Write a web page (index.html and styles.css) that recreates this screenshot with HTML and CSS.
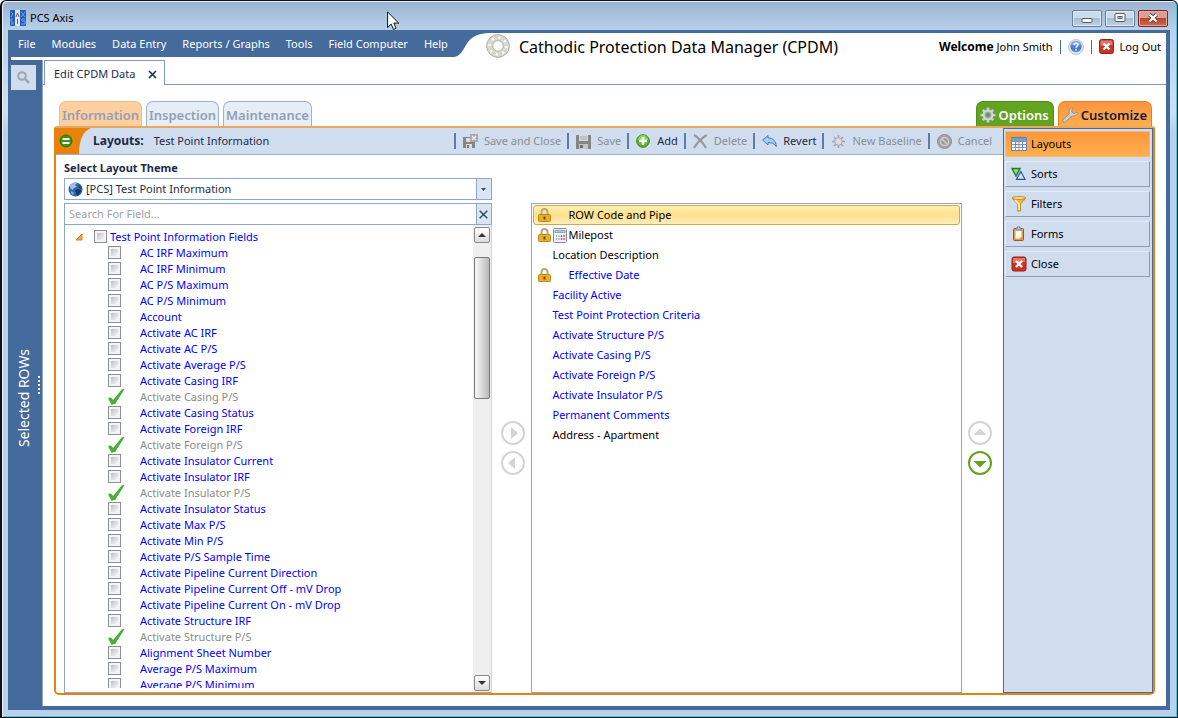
FILE: index.html
```html
<!DOCTYPE html>
<html lang="en">
<head>
  <meta charset="UTF-8">
  <title>PCS Axis</title>
  <link rel="stylesheet" href="styles.css">
</head>
<body>
  <div class="window">
    <div class="titlebar">
      <svg class="app-icon" width="16" height="16" viewBox="0 0 16 16">
        <rect width="16" height="16" rx="1" fill="#1f5fc0"/>
        <rect x="5" width="5" height="16" fill="#e4e4e4"/>
        <path d="M1 2l2 2-2 3M3 9H1v3h2v2H1M11 2l4 5M15 2l-4 5M15 9h-3v2h3v3h-4" fill="none" stroke="#6fa2e6"/>
        <path d="M6 7l1.500-4L9 7M7.500 9v5" fill="none" stroke="#667"/>
      </svg>
      <span class="app-name">PCS Axis</span>
      <div class="win-buttons">
        <button class="win-btn" aria-label="Minimize"><svg width="12" height="12" viewBox="0 0 12 12"><rect x="1" y="6.500" width="10" height="4" rx="1" fill="#fff" stroke="#4b5a70"/></svg></button>
        <button class="win-btn" aria-label="Maximize"><svg width="12" height="12" viewBox="0 0 12 12"><rect x="1" y="1.500" width="10" height="8" rx="1" fill="#fff" stroke="#4b5a70"/><rect x="4" y="4.500" width="4" height="2" fill="#a5bcd6" stroke="#4b5a70"/></svg></button>
        <button class="win-btn win-close" aria-label="Close window"><svg width="12" height="12" viewBox="0 0 12 12"><path d="M2.500 2.500l7 7M9.500 2.500l-7 7" stroke="#5b4550" stroke-width="4"/><path d="M2.500 2.500l7 7M9.500 2.500l-7 7" stroke="#fff" stroke-width="2.400"/></svg></button>
      </div>
    </div>

    <div class="client">
      <header class="header">
        <nav class="menu">
          <a href="#">File</a>
          <a href="#">Modules</a>
          <a href="#">Data Entry</a>
          <a href="#">Reports / Graphs</a>
          <a href="#">Tools</a>
          <a href="#">Field Computer</a>
          <a href="#">Help</a>
        </nav>
        <svg class="curve" width="36" height="24" viewBox="0 0 36 24"><path d="M0 0H36C22 0 16 5 12 12C8 19 6 23 0 24Z" fill="#446b9c"/></svg>
        <svg class="ring" width="24" height="24" viewBox="0 0 24 24">
          <circle cx="12" cy="12" r="8.300" fill="none" stroke="#d8d8cc" stroke-width="6.200"/>
          <circle cx="12" cy="12" r="11.400" fill="none" stroke="#a4a49a" stroke-width=".8"/>
          <circle cx="12" cy="12" r="5.300" fill="#fff" stroke="#a4a49c" stroke-width=".8"/>
          <circle cx="12" cy="12" r="8.400" fill="none" stroke="#fff" stroke-width="2.400" stroke-dasharray="2 4.600"/>
        </svg>
        <h1>Cathodic Protection Data Manager (CPDM)</h1>
        <div class="user">
          <span><b>Welcome</b> John Smith</span>
          <i class="sep"></i>
          <a href="#" aria-label="Help"><svg width="16" height="16" viewBox="0 0 16 16"><circle cx="8" cy="8" r="7.500" fill="#dfe3ea" stroke="#c4c8d0"/><circle cx="8" cy="7.500" r="5.600" fill="#4b7fd6"/><path d="M3 6A5.300 5.300 0 0 1 13 6Z" fill="#86abea"/><path d="M6 6.200C6 3.600 10.200 3.700 10 6C9.900 7.300 8 7.200 8 8.800M8 10v1.600" fill="none" stroke="#fff" stroke-width="1.500"/></svg></a>
          <i class="sep"></i>
          <a href="#" class="logout"><svg width="15" height="15" viewBox="0 0 15 15"><rect x=".5" y=".5" width="14" height="14" rx="2" fill="#cc3325" stroke="#982015"/><path d="M1.500 7V2.500Q1.500 1.500 2.500 1.500H12.500Q13.500 1.500 13.500 2.500V6Z" fill="#e07768"/><path d="M4.500 4.500l6 6M10.500 4.500l-6 6" stroke="#fff" stroke-width="2.400"/></svg>Log Out</a>
        </div>
      </header>

      <div class="main">
        <aside class="rows-bar">
          <button class="find" aria-label="Search"><svg width="13" height="13" viewBox="0 0 13 13"><circle cx="5" cy="5" r="3.800" fill="none" stroke="#a0a4aa" stroke-width="2"/><path d="M8 8l4 4" stroke="#a0a4aa" stroke-width="2.400"/></svg></button>
          <div class="rows-label">
            <span>Selected ROWs</span>
            <i class="grip"></i>
          </div>
        </aside>

        <div class="content">
          <div class="doc-tabs">
            <div class="doc-tab">Edit CPDM Data <button aria-label="Close tab"><svg width="9" height="9" viewBox="0 0 9 9"><path d="M1 1l7 7M8 1l-7 7" stroke="#1d3557" stroke-width="1.700"/></svg></button></div>
          </div>

          <div class="page">
            <div class="section-tabs">
              <button class="tab tab-info">Information</button>
              <button class="tab">Inspection</button>
              <button class="tab">Maintenance</button>
              <button class="tab tab-options"><svg width="16" height="16" viewBox="0 0 16 16"><path d="M8 .5v15M.5 8h15M2.800 2.800l10.400 10.400M13.200 2.800L2.800 13.200" stroke="#c9cede" stroke-width="2.600"/><circle cx="8" cy="8" r="4.400" fill="#9aa2bd" stroke="#d5d9e6" stroke-width="2"/><circle cx="8" cy="8" r="2" fill="#63a31f"/></svg>Options</button>
              <button class="tab tab-customize"><svg width="16" height="16" viewBox="0 0 16 16"><path d="M2.500 13.500L9 7.500" stroke="#8b8b8b" stroke-width="4.400" stroke-linecap="round"/><path d="M11.500 .8C8 .5 6.500 3.500 7.500 6.500C8.500 9.500 13 10.500 15.500 6.500L15 5L12.500 6.500L10 5.500L9.700 3.200Z" fill="#d0d0d0" stroke="#8b8b8b" stroke-width=".8"/><path d="M2.500 13.500L9.500 7" stroke="#d0d0d0" stroke-width="2.800" stroke-linecap="round"/></svg>Customize</button>
            </div>

            <div class="panel">
              <div class="work">
                <div class="toolbar">
                  <div class="corner">
                    <svg width="37" height="26" viewBox="0 0 37 26"><path d="M0 0H35C27 3 23 12 23 26H0Z" fill="#e8820c"/><circle cx="10" cy="13" r="6" fill="#3c9312" stroke="#2b740b"/><path d="M6.500 11h7M6.500 15h7" stroke="#fff" stroke-width="2"/></svg>
                  </div>
                  <b>Layouts:</b>
                  <span class="layout-name">Test Point Information</span>
                  <div class="actions">
                    <button class="action" disabled><svg width="15" height="15" viewBox="0 0 15 15"><path d="M0 3h12v11H0z" fill="#858585"/><path d="M3 4h5v4H3zM3 10h6v4H3z" fill="#dcdcdc"/><path d="M4 11h2v3H4z" fill="#777"/><path d="M7 0h8v8H7z" fill="#a8a8a8"/><path d="M9 2l4 4M13 2L9 6" stroke="#eee" stroke-width="1.400"/></svg>Save and Close</button>
                    <button class="action" disabled><svg width="15" height="15" viewBox="0 0 15 15"><path d="M0 1h15v14H0z" fill="#858585"/><path d="M3 1h9v6H3z" fill="#d8d8d8"/><path d="M4 3h7M4 5h7" stroke="#a8a8a8"/><path d="M3 10h9v5H3z" fill="#c6c6c6"/><path d="M4 11h3v3H4z" fill="#6e6e6e"/></svg>Save</button>
                    <button class="action"><svg width="15" height="15" viewBox="0 0 15 15"><circle cx="7" cy="7" r="6.300" fill="#55b52a" stroke="#2f8a14"/><path d="M2 6A5 5 0 0 1 12 6Z" fill="#8cd363"/><path d="M7 3v8M3 7h8" stroke="#fff" stroke-width="2.600"/></svg>Add</button>
                    <button class="action" disabled><svg width="15" height="15" viewBox="0 0 15 15"><path d="M1 1C6 4 10 9 13 14M14 1C8 4 4 9 1 14" fill="none" stroke="#999" stroke-width="2.200"/></svg>Delete</button>
                    <button class="action"><svg width="15" height="15" viewBox="0 0 15 15"><path d="M.7 6L6 1.500V4C11 4 14 7 14.300 12.500C12 9.500 10 8.500 6 8.500V11Z" fill="#a9cdf0" stroke="#3f78b5"/></svg>Revert</button>
                    <button class="action" disabled><svg width="15" height="15" viewBox="0 0 15 15"><path d="M7.500 1v13M1 7.500h13M3 3l9 9M12 3L3 12" stroke="#a5a5a5" stroke-width="1.700"/><circle cx="7.500" cy="7.500" r="3.800" fill="#d9dde2" stroke="#a8a8a8"/></svg>New Baseline</button>
                    <button class="action" disabled><svg width="15" height="15" viewBox="0 0 15 15"><circle cx="7.500" cy="7.500" r="7" fill="#a3a3a3" stroke="#8f8f8f"/><circle cx="7.500" cy="7.500" r="4" fill="#999" stroke="#cdcdcd" stroke-width="1.500"/><path d="M4.500 4.500l6 6" stroke="#cdcdcd" stroke-width="1.700"/></svg>Cancel</button>
                  </div>
                </div>

                <div class="editor">
                  <div class="fields">
                    <label class="theme-label" for="theme">Select Layout Theme</label>
                    <div class="combo">
                      <svg width="15" height="15" viewBox="0 0 15 15"><circle cx="7.500" cy="7.500" r="7" fill="#2f66ad"/><path d="M2 3Q5 0 9 1L7 3L9 4.500L6 6L4.500 8L2 6Z" fill="#9dbfe6"/><path d="M7 8L11 7L13.500 9Q12 12 9 14L8 11Z" fill="#16396f"/><path d="M10 3l3 1 1 3-3-1z" fill="#1b427e"/><path d="M3 9l3 2-1 2-2-2z" fill="#88aede"/></svg>
                      <select id="theme"><option>[PCS] Test Point Information</option></select>
                      <span class="drop"><svg width="5" height="3" viewBox="0 0 5 3"><path d="M0 0h5L2.500 3z" fill="#2c4a77"/></svg></span>
                    </div>
                    <div class="search">
                      <input type="text" placeholder="Search For Field..." aria-label="Search For Field">
                      <button class="drop" aria-label="Clear search"><svg width="9" height="9" viewBox="0 0 9 9"><path d="M.7 .7l7.600 7.600M8.300 .7L.7 8.300" stroke="#34496a" stroke-width="1.500"/></svg></button>
                    </div>
                    <div class="tree">
                      <div class="tree-body">
                        <label class="root"><svg width="8" height="8" viewBox="0 0 8 8"><path d="M7 1v6H1z" fill="#f9a54a" stroke="#e07d15"/></svg><input type="checkbox">Test Point Information Fields</label>
                        <label><input type="checkbox">AC IRF Maximum</label>
                        <label><input type="checkbox">AC IRF Minimum</label>
                        <label><input type="checkbox">AC P/S Maximum</label>
                        <label><input type="checkbox">AC P/S Minimum</label>
                        <label><input type="checkbox">Account</label>
                        <label><input type="checkbox">Activate AC IRF</label>
                        <label><input type="checkbox">Activate AC P/S</label>
                        <label><input type="checkbox">Activate Average P/S</label>
                        <label><input type="checkbox">Activate Casing IRF</label>
                        <label class="used"><input type="checkbox" checked disabled>Activate Casing P/S</label>
                        <label><input type="checkbox">Activate Casing Status</label>
                        <label><input type="checkbox">Activate Foreign IRF</label>
                        <label class="used"><input type="checkbox" checked disabled>Activate Foreign P/S</label>
                        <label><input type="checkbox">Activate Insulator Current</label>
                        <label><input type="checkbox">Activate Insulator IRF</label>
                        <label class="used"><input type="checkbox" checked disabled>Activate Insulator P/S</label>
                        <label><input type="checkbox">Activate Insulator Status</label>
                        <label><input type="checkbox">Activate Max P/S</label>
                        <label><input type="checkbox">Activate Min P/S</label>
                        <label><input type="checkbox">Activate P/S Sample Time</label>
                        <label><input type="checkbox">Activate Pipeline Current Direction</label>
                        <label><input type="checkbox">Activate Pipeline Current Off - mV Drop</label>
                        <label><input type="checkbox">Activate Pipeline Current On - mV Drop</label>
                        <label><input type="checkbox">Activate Structure IRF</label>
                        <label class="used"><input type="checkbox" checked disabled>Activate Structure P/S</label>
                        <label><input type="checkbox">Alignment Sheet Number</label>
                        <label><input type="checkbox">Average P/S Maximum</label>
                        <label><input type="checkbox">Average P/S Minimum</label>
                      </div>
                      <div class="scrollbar">
                        <button class="scroll-btn" aria-label="Scroll up"><svg width="8" height="4" viewBox="0 0 8 4"><path d="M0 4h8L4 0z" fill="#333"/></svg></button>
                        <div class="track"><div class="thumb"></div></div>
                        <button class="scroll-btn" aria-label="Scroll down"><svg width="8" height="4" viewBox="0 0 8 4"><path d="M0 0h8L4 4z" fill="#333"/></svg></button>
                      </div>
                    </div>
                  </div>

                  <div class="movers">
                    <button class="round" aria-label="Add field" disabled><svg width="24" height="24" viewBox="0 0 24 24"><circle cx="12" cy="12" r="11" fill="#fff" stroke="currentColor" stroke-width="2"/><path d="M10 6v12l7-6z" fill="currentColor"/></svg></button>
                    <button class="round" aria-label="Remove field" disabled><svg width="24" height="24" viewBox="0 0 24 24"><circle cx="12" cy="12" r="11" fill="#fff" stroke="currentColor" stroke-width="2"/><path d="M14 6v12l-7-6z" fill="currentColor"/></svg></button>
                  </div>

                  <ul class="selected">
                    <li class="current"><svg class="lock" width="13" height="14" viewBox="0 0 13 14"><path d="M3.500 7V4a3 3 0 0 1 6 0v3" fill="none" stroke="#b7a77c" stroke-width="2"/><rect x=".5" y="6.500" width="12" height="7" rx="1" fill="#e9ad2c" stroke="#bf8516"/><path d="M6.500 8.500v3" stroke="#6b4a08" stroke-width="2"/></svg><span class="slot"></span>ROW Code and Pipe</li>
                    <li><svg class="lock" width="13" height="14" viewBox="0 0 13 14"><path d="M3.500 7V4a3 3 0 0 1 6 0v3" fill="none" stroke="#b7a77c" stroke-width="2"/><rect x=".5" y="6.500" width="12" height="7" rx="1" fill="#e9ad2c" stroke="#bf8516"/><path d="M6.500 8.500v3" stroke="#6b4a08" stroke-width="2"/></svg><span class="slot"><svg width="14" height="15" viewBox="0 0 14 15"><rect x=".5" y=".5" width="13" height="14" rx="1" fill="#eef0f8" stroke="#8488a0"/><path d="M2 2.500h10v2H2z" fill="#a9cbee" stroke="#8aa"/><path d="M3.500 7v6M6 7v6" stroke="#99a0c4" stroke-dasharray="2 1"/><path d="M8.500 7v6M11 7v6" stroke="#d8565a" stroke-width="1.400" stroke-dasharray="2 1"/></svg></span>Milepost</li>
                    <li><span class="lock"></span>Location Description</li>
                    <li class="blue"><svg class="lock" width="13" height="14" viewBox="0 0 13 14"><path d="M3.500 7V4a3 3 0 0 1 6 0v3" fill="none" stroke="#b7a77c" stroke-width="2"/><rect x=".5" y="6.500" width="12" height="7" rx="1" fill="#e9ad2c" stroke="#bf8516"/><path d="M6.500 8.500v3" stroke="#6b4a08" stroke-width="2"/></svg><span class="slot"></span>Effective Date</li>
                    <li class="blue"><span class="lock"></span>Facility Active</li>
                    <li class="blue"><span class="lock"></span>Test Point Protection Criteria</li>
                    <li class="blue"><span class="lock"></span>Activate Structure P/S</li>
                    <li class="blue"><span class="lock"></span>Activate Casing P/S</li>
                    <li class="blue"><span class="lock"></span>Activate Foreign P/S</li>
                    <li class="blue"><span class="lock"></span>Activate Insulator P/S</li>
                    <li class="blue"><span class="lock"></span>Permanent Comments</li>
                    <li><span class="lock"></span>Address - Apartment</li>
                  </ul>

                  <div class="movers">
                    <button class="round" aria-label="Move up" disabled><svg width="24" height="24" viewBox="0 0 24 24"><circle cx="12" cy="12" r="11" fill="#fff" stroke="currentColor" stroke-width="2"/><path d="M5.500 14h13L12 7.500z" fill="currentColor"/></svg></button>
                    <button class="round" aria-label="Move down"><svg width="24" height="24" viewBox="0 0 24 24"><circle cx="12" cy="12" r="11" fill="#fff" stroke="currentColor" stroke-width="2"/><path d="M5.500 10h13L12 16.500z" fill="currentColor"/></svg></button>
                  </div>
                </div>
              </div>

              <nav class="side">
                <button class="side-btn active"><svg width="16" height="14" viewBox="0 0 16 14"><path d="M.5 .5h15v13H.5z" fill="#fff" stroke="#5c7fae"/><path d="M1 1h14v3H1z" fill="#6aa5de"/><path d="M0 4.500h16M0 7.500h16M0 10.500h16M4.500 1v13M8 1v13M11.500 1v13" stroke="#7c93b5"/></svg>Layouts</button>
                <button class="side-btn"><svg width="16" height="16" viewBox="0 0 16 16"><path d="M1 2.500h8L5 10z" fill="#8fdc8a" stroke="#1f7a2c" stroke-width="1.400"/><path d="M5.500 13.300h8.500L9.800 5.500z" fill="#d5e5f8" stroke="#2d4f93" stroke-width="1.200"/></svg>Sorts</button>
                <button class="side-btn"><svg width="16" height="16" viewBox="0 0 16 16"><path d="M1 2l5.500 6v7h3V8L15 2z" fill="#f0b53c" stroke="#bb8015" stroke-width=".8"/><path d="M4 4l4 4v6" fill="none" stroke="#fff0b8" stroke-width="1.600"/><ellipse cx="8" cy="2" rx="7" ry="1.500" fill="#f7d78c" stroke="#bb8015" stroke-width=".8"/></svg>Filters</button>
                <button class="side-btn"><svg width="16" height="16" viewBox="0 0 16 16"><rect x="2.500" y="2.500" width="10" height="12" rx="1" fill="#e49a45" stroke="#9b5a1c"/><path d="M4.500 4.500h6v6l-2 2h-4z" fill="#fff"/><path d="M5 4V2h1.500V.8h2V2H10v2z" fill="#c4d0e2" stroke="#51698e" stroke-width=".8"/></svg>Forms</button>
                <button class="side-btn"><svg width="16" height="16" viewBox="0 0 16 16"><rect x="1" y="1" width="14" height="14" rx="2" fill="#cc3325" stroke="#982015"/><path d="M2 7V2H14V6Z" fill="#e07768"/><path d="M5 5l6 6M11 5l-6 6" stroke="#fff" stroke-width="2.400"/></svg>Close</button>
              </nav>
            </div>
          </div>
        </div>
      </div>
    </div>
    <svg class="cursor" width="13" height="19" viewBox="0 0 13 19"><path d="M.6 1v15.500l3.600-3.400 2.300 5.300 2.600-1.100-2.300-5.200h5z" fill="#fff" stroke="#111"/></svg>
  </div>
</body>
</html>
```
FILE: styles.css
```css
* {
  box-sizing: border-box;
}
body {
  margin: 0;
  font-family: "Noto Sans", "Open Sans", sans-serif;
  font-size: 11px;
  line-height: 16px;
  color: #000;
}
button {
  font: inherit;
  color: inherit;
  border: none;
  padding: 0;
  background: none;
  display: flex;
  align-items: center;
  white-space: nowrap;
}
a {
  color: inherit;
  text-decoration: none;
}
svg {
  display: block;
  flex: none;
}

/* window frame */
.window {
  position: relative;
  display: flex;
  flex-direction: column;
  height: 100vh;
  min-height: 600px;
  padding: 0 7px 7px 6px;
  border: 1px solid #111;
  border-left-width: 2px;
  border-radius: 6px 6px 0 0;
  box-shadow: inset 1px 1px 0 #e6f0fa, inset -1px -1px 0 #35cfe6;
  background: linear-gradient(#9ab3d1, #b9d1ea 30px, #cfe0f3 110px, #b9d1ea 130px);
}
.titlebar {
  display: flex;
  align-items: center;
  height: 29px;
  padding: 5px 2px 0;
}
.app-name {
  margin-left: 4px;
}
.win-buttons {
  display: flex;
  gap: 3px;
  margin-left: auto;
}
.win-btn {
  width: 30px;
  height: 17px;
  justify-content: center;
  border: 1px solid #6a7f9c;
  border-radius: 2px;
  background: linear-gradient(#cddcec 45%, #a5bdd8 50%, #bcd2e8);
  box-shadow: inset 0 0 0 1px #dfe9f5;
}
.win-close {
  border-color: #762a26;
  background: linear-gradient(#dd9d93 45%, #bd4330 50%, #cc6a4c);
  box-shadow: inset 0 0 0 1px #e3aaa0;
}
.cursor {
  position: absolute;
  left: 385px;
  top: 10px;
}

.client {
  flex: 1;
  min-height: 0;
  display: flex;
  flex-direction: column;
  padding: 3px 4px 4px 3px;
  background: #446b9c;
}

/* menu and title */
.header {
  display: flex;
  height: 27px;
  background: #fff;
  white-space: nowrap;
}
.menu {
  display: flex;
  gap: 16px;
  height: 24px;
  padding: 3px 6px 0 7px;
  background: #446b9c;
  color: #fff;
}
.ring {
  margin: 1px 9px 0 -4px;
}
h1 {
  margin: 4px 0 0;
  font-size: 16px;
  font-weight: normal;
  line-height: 20px;
}
.user {
  display: flex;
  align-items: center;
  gap: 7px;
  margin-left: auto;
  padding-right: 5px;
}
.user b {
  font-size: 12px;
}
.logout {
  display: flex;
  align-items: center;
  gap: 6px;
}
.sep {
  width: 1px;
  height: 14px;
  background: #446b9c;
}

.main {
  flex: 1;
  min-height: 0;
  display: flex;
}
.rows-bar {
  display: flex;
  flex-direction: column;
  width: 31px;
  padding-top: 5px;
  color: #fff;
}
.find {
  width: 25px;
  height: 25px;
  justify-content: center;
  background: #d0ddee;
}
.rows-label {
  flex: 1;
  display: flex;
  align-items: center;
}
.rows-label span {
  width: 26px;
  font-size: 14px;
  line-height: 26px;
  writing-mode: vertical-rl;
  transform: rotate(180deg);
  white-space: nowrap;
}
.grip {
  height: 18px;
  margin: 0 0 26px 1px;
  border-left: 2px dotted #fff;
}

/* document area */
.content {
  flex: 1;
  min-width: 0;
  display: flex;
  flex-direction: column;
  background: #fff;
  border-left: 1px solid #8fa6c8;
}
.doc-tabs {
  display: flex;
  height: 25px;
  padding-left: 1px;
  border-bottom: 1px solid #8099c0;
}
.doc-tab {
  display: flex;
  align-items: center;
  gap: 13px;
  height: 25px;
  padding: 2px 7px 0 9px;
  border: 1px solid #8099c0;
  border-bottom: none;
  background: #fff;
  color: #1d2c4a;
}
.page {
  flex: 1;
  min-height: 0;
  display: flex;
  flex-direction: column;
  padding: 16px 11px 11px;
}
.section-tabs {
  display: flex;
  gap: 4px;
  padding: 0 3px 0 5px;
}
.tab {
  height: 25px;
  padding: 2px 2px 0;
  border: 1px solid #9db2cf;
  border-bottom: none;
  border-radius: 7px 7px 0 0;
  background: #e6edf7;
  color: #93a0b4;
  font-size: 13px;
  font-weight: 600;
}
.tab-info {
  border-color: #f0bd85;
  background: #ffcf9f;
}
.tab-options,
.tab-customize {
  gap: 3px;
  padding: 2px 4px 0 3px;
}
.tab-options {
  margin-left: auto;
  border-color: #4c8f14;
  background: #63a31f;
  color: #fff;
}
.tab-customize {
  border-color: #e8820c;
  background: linear-gradient(#ff9440, #ffad4c);
  color: #10203c;
}

.panel {
  flex: 1;
  min-height: 0;
  display: flex;
  border: 2px solid #e8820c;
  border-top-color: #eda75c;
  border-radius: 3px 3px 5px 5px;
}
.work {
  flex: 1;
  min-width: 0;
  display: flex;
  flex-direction: column;
}
.toolbar {
  display: flex;
  align-items: center;
  height: 27px;
  padding-right: 5px;
  border-bottom: 1px solid #9db2d3;
  background: #d0ddee;
  color: #1b2b49;
  white-space: nowrap;
}
.toolbar b {
  font-size: 12px;
}
.layout-name {
  margin-left: 10px;
}
.actions {
  display: flex;
  margin-left: auto;
}
.action {
  gap: 6px;
  height: 16px;
  padding: 0 6px 0 7px;
  border-left: 2px solid #5a7cab;
}
.action:disabled {
  color: #8b8d91;
}

.editor {
  flex: 1;
  min-height: 0;
  display: flex;
  padding-left: 8px;
}
.fields {
  flex: 427;
  min-width: 0;
  display: flex;
  flex-direction: column;
}
.theme-label {
  padding: 5px 0 2px;
  font-weight: bold;
  color: #1b2b49;
}
.combo,
.search {
  display: flex;
  align-items: center;
  border: 1px solid #8ea7cb;
  height: 22px;
}
.combo {
  padding-left: 3px;
  margin-bottom: 3px;
}
.combo select {
  flex: 1;
  appearance: none;
  border: none;
  padding: 0 3px;
  background: none;
  color: #1b2b49;
  font: inherit;
}
.drop {
  display: flex;
  align-items: center;
  justify-content: center;
  width: 15px;
  height: 20px;
  border-left: 1px solid #8ea7cb;
  background: #dbe6f4;
}
.search input {
  flex: 1;
  min-width: 0;
  border: none;
  padding: 0 4px;
  font: inherit;
}
.search input::placeholder {
  color: #a2a2aa;
}

/* field tree */
.tree {
  flex: 1;
  min-height: 0;
  display: flex;
  border: 1px solid #8ea7cb;
  border-right-color: #c9d7e8;
  border-top: none;
}
.tree-body {
  flex: 1;
  min-width: 0;
  overflow: hidden;
  padding-top: 4px;
  margin-bottom: 4px;
  color: #00f;
}
.tree label {
  display: flex;
  align-items: center;
  height: 16px;
  padding-left: 43px;
  white-space: nowrap;
}
.tree .root {
  padding-left: 10px;
}
.root svg {
  margin-right: 11px;
}
.tree .used {
  color: #8c8c8c;
}
.tree input {
  appearance: none;
  width: 13px;
  height: 13px;
  margin: 0 19px 2px 0;
  border: 1px solid #8a8f94;
  background: linear-gradient(135deg, #b9bec6, #fafafa) content-box, #f4f4f4;
  padding: 2px;
}
.tree .root input {
  margin-right: 3px;
}
.tree input:disabled {
  width: 17px;
  height: 16px;
  margin: 0 15px 0 0;
  border: none;
  background: #4caf35;
  clip-path: polygon(0 58%, 16% 52%, 30% 68%, 82% 2%, 98% 0, 42% 94%, 20% 98%);
}
.scrollbar {
  display: flex;
  flex-direction: column;
  width: 18px;
  padding: 2px 1px 1px;
  background: #efefef;
}
.scroll-btn {
  width: 16px;
  height: 16px;
  justify-content: center;
  border: 1px solid #888;
  border-radius: 2px;
  background: linear-gradient(#fff, #dcdcdc);
}
.track {
  flex: 1;
  padding-top: 14px;
}
.thumb {
  height: 34%;
  border: 1px solid #777;
  border-radius: 2px;
  background: linear-gradient(90deg, #fafafa, #b9b9b9);
}

.movers {
  flex: none;
  display: flex;
  flex-direction: column;
  justify-content: center;
  align-items: center;
  gap: 6px;
  width: 39px;
  padding-left: 3px;
  margin-top: 48px;
  color: #62a21e;
}
.selected + .movers {
  width: 41px;
  padding: 0 5px 0 0;
}
.round:disabled {
  color: #d4d4d4;
}

/* chosen fields */
.selected {
  flex: 427;
  min-width: 0;
  margin: 48px 0 0;
  padding: 1px;
  list-style: none;
  border: 1px solid #8ea7cb;
}
.selected li {
  display: flex;
  align-items: center;
  height: 20px;
  padding: 0 4px;
  border: 1px solid transparent;
  white-space: nowrap;
}
.selected .current {
  border-color: #d3a84c;
  border-radius: 3px;
  background: linear-gradient(#fff0b0, #ffe08c 50%, #fdeebc);
}
.lock {
  width: 13px;
  margin-right: 2px;
}
.slot {
  width: 16px;
}
.blue {
  color: #00f;
}

/* customize menu */
.side {
  display: flex;
  flex-direction: column;
  gap: 4px;
  width: 150px;
  padding: 2px 2px 0 1px;
  border: 1px solid #446b9c;
  background: #d0ddee;
}
.side-btn {
  gap: 4px;
  height: 26px;
  padding-left: 5px;
  border: 1px solid #e3ebf6;
  border-right-color: #8d9db3;
  border-bottom-color: #8d9db3;
}
.side-btn.active {
  border-color: #ffb766;
  background: linear-gradient(#ff953c, #ffb04e);
}
```
